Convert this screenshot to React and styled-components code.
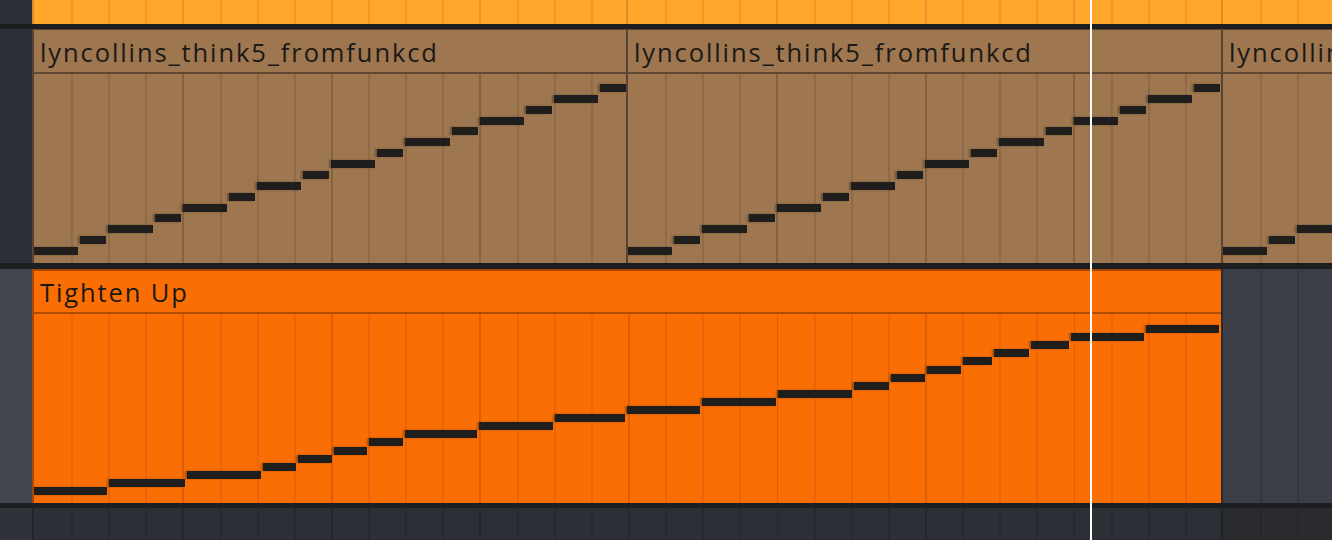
import React from 'react';
import styled, { createGlobalStyle, css } from 'styled-components';

const BEAT = 37.125;

const Global = createGlobalStyle`
  html, body { margin: 0; padding: 0; background: #1d1e21; }
  body { width: 1332px; height: 540px; overflow: hidden; font-family: "Open Sans", "Noto Sans", sans-serif; }
`;

const grid = (base, beat, bar) => css`
  background-color: ${base};
  background-image:
    linear-gradient(to right, ${base} 0 2px, transparent 2px),
    repeating-linear-gradient(to right, transparent 0 ${BEAT * 4 - 2}px, ${bar} ${BEAT * 4 - 2}px ${BEAT * 4}px),
    repeating-linear-gradient(to right, transparent 0 ${BEAT - 2}px, ${beat} ${BEAT - 2}px ${BEAT}px);
  background-position: 0 0, 2px 0, 2px 0;
`;

const Arrangement = styled.div`
  position: relative;
  width: 1332px;
  height: 540px;
  display: flex;
  flex-direction: column;
  background: #1d1e21;
  overflow: hidden;
`;

const TrackRow = styled.div`
  display: flex;
  flex: none;
  height: ${p => p.$h}px;
`;

const TrackHead = styled.div`
  flex: none;
  width: 32px;
  background: ${p => p.$bg};
`;

const Lane = styled.div`
  flex: 1;
  min-width: 0;
  display: flex;
  overflow: hidden;
`;

const Divider = styled.div`
  flex: none;
  height: ${p => p.$h}px;
  background: #1d1e21;
`;

const Clip = styled.div`
  flex: ${p => (p.$w ? `0 0 ${p.$w}px` : '1 1 0')};
  min-width: 0;
  display: flex;
  flex-direction: column;
  box-sizing: border-box;
  border-left: 2px solid ${p => p.$edge};
  border-top: ${p => p.$top || 0}px solid ${p => p.$edge};
  background: ${p => p.$base};
  overflow: hidden;
`;

const ClipTitle = styled.div`
  flex: none;
  box-sizing: border-box;
  height: ${p => p.$h}px;
  line-height: ${p => p.$lh}px;
  padding-left: 6px;
  border-bottom: 2px solid ${p => p.$line};
  font-size: 25.5px;
  font-weight: 500;
  letter-spacing: 1.9px;
  color: #1c1915;
  white-space: nowrap;
  overflow: hidden;
`;

const ClipBody = styled.div`
  flex: 1;
  position: relative;
  overflow: hidden;
  ${p => grid(p.$base, p.$beat, p.$bar)}
`;

const Empty = styled.div`
  flex: ${p => (p.$w ? `0 0 ${p.$w}px` : '1 1 0')};
  min-width: 0;
  box-sizing: border-box;
  border-left: 2px solid ${p => p.$edge};
  ${p => grid(p.$base, p.$beat, p.$bar)}
`;

const Note = styled.div`
  position: absolute;
  height: 8px;
  background: #1f1e1d;
  box-shadow: -2px 0 2px rgba(20, 16, 12, 0.35);
`;

const Playhead = styled.div`
  position: absolute;
  top: 0;
  bottom: 0;
  left: 1090px;
  width: 2px;
  background: #ffffff;
  z-index: 5;
`;

const brownNotes = [];
for (let i = 0; i < 8; i++) {
  brownNotes.push({ left: 2 * i * BEAT, width: 1.25 * BEAT - 2, top: 173 - 10.87 * (2 * i) });
  brownNotes.push({ left: (2 * i + 1.25) * BEAT, width: 0.75 * BEAT - 2, top: 173 - 10.87 * (2 * i + 1) });
}

const orangeBounds = [34, 109, 187, 263, 298, 334, 369, 405, 479, 555, 627, 702, 778, 854, 891, 927, 963, 994, 1031, 1071, 1146, 1221];
const orangeNotes = orangeBounds.slice(0, -1).map((b, k) => ({
  left: b - 34,
  width: orangeBounds[k + 1] - b - 2,
  top: 173 - 8.1 * k,
}));

const BROWN = { base: '#9e7650', beat: '#8e6a48', bar: '#84623f', edge: '#5a4431', line: '#5e4733' };
const ORANGE = { base: '#fb6e03', beat: '#e8660a', bar: '#dc5f08', edge: '#a84800', line: '#b04d02' };
const TOP = { base: '#ffa62b', beat: '#ee9a2a', bar: '#e89428', edge: '#d98d27' };

function NoteList({ notes }) {
  return notes.map((n, i) => (
    <Note key={i} style={{ left: n.left, width: n.width, top: n.top }} />
  ));
}

function BrownClip({ w }) {
  return (
    <Clip $w={w} $edge={BROWN.edge} $top={1} $base={BROWN.base}>
      <ClipTitle $h={44} $lh={44} $line={BROWN.line}>lyncollins_think5_fromfunkcd</ClipTitle>
      <ClipBody $base={BROWN.base} $beat={BROWN.beat} $bar={BROWN.bar}>
        <NoteList notes={brownNotes} />
      </ClipBody>
    </Clip>
  );
}

function TopClip({ w }) {
  return (
    <Clip $w={w} $edge={TOP.edge} $base={TOP.base}>
      <ClipBody $base={TOP.base} $beat={TOP.beat} $bar={TOP.bar} />
    </Clip>
  );
}

export default function App() {
  return (
    <>
      <Global />
      <Arrangement>
        <TrackRow $h={24}>
          <TrackHead $bg="#2d3039" />
          <Lane>
            <TopClip w={594} />
            <TopClip w={595} />
            <TopClip />
          </Lane>
        </TrackRow>
        <Divider $h={5} />
        <TrackRow $h={234}>
          <TrackHead $bg="#2d3039" />
          <Lane>
            <BrownClip w={594} />
            <BrownClip w={595} />
            <BrownClip />
          </Lane>
        </TrackRow>
        <Divider $h={6} />
        <TrackRow $h={234}>
          <TrackHead $bg="#42454e" />
          <Lane>
            <Clip $w={1189} $edge={ORANGE.edge} $top={2} $base={ORANGE.base}>
              <ClipTitle $h={43} $lh={42} $line={ORANGE.line}>Tighten Up</ClipTitle>
              <ClipBody $base={ORANGE.base} $beat={ORANGE.beat} $bar={ORANGE.bar}>
                <NoteList notes={orangeNotes} />
              </ClipBody>
            </Clip>
            <Empty $edge="#2b2c30" $base="#3b3e47" $beat="#34373f" $bar="#32343c" />
          </Lane>
        </TrackRow>
        <Divider $h={5} />
        <TrackRow $h={32}>
          <TrackHead $bg="#30323a" />
          <Lane>
            <Empty $w={1189} $edge="#232428" $base="#2d2f36" $beat="#27292e" $bar="#26272c" />
            <Empty $edge="#212226" $base="#2a2b2f" $beat="#25262a" $bar="#242528" />
          </Lane>
        </TrackRow>
        <Playhead />
      </Arrangement>
    </>
  );
}
